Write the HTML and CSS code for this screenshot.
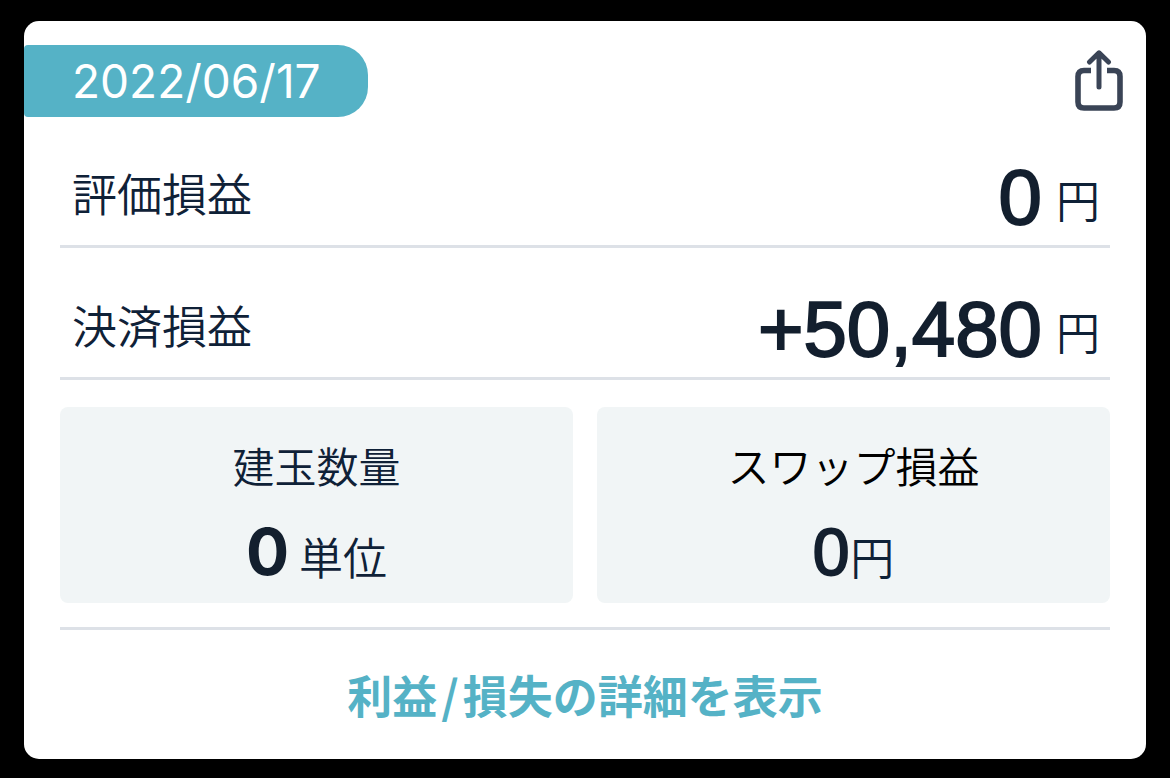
FILE: index.html
```
<!DOCTYPE html>
<html lang="ja">
<head>
    <meta charset="UTF-8">
    <meta name="viewport" content="width=device-width, initial-scale=1.0">
    <title>損益</title>
    <link rel="stylesheet" href="styles.css">
</head>
<body>
    <main class="card">
        <header class="card-header">
            <time class="date" datetime="2022-06-17">2022/06/17</time>
            <button class="share" type="button" aria-label="共有">
                <svg width="50" height="62" viewBox="0 0 50 62" fill="none" stroke="currentColor">
                    <path d="M17 20.500H10Q4 20.500 4 26.500V52Q4 58 10 58H40Q46 58 46 52V26.500Q46 20.500 40 20.500H33" stroke-width="5.6"/>
                    <path d="M25 37V4M15.500 12L25 2.800L34.500 12" stroke-width="5" stroke-linecap="round" stroke-linejoin="round"/>
                </svg>
            </button>
        </header>

        <dl class="totals">
            <div class="row">
                <dt class="label">評価損益</dt>
                <dd class="amount"><span class="number">0</span><span class="unit">円</span></dd>
            </div>
            <div class="row">
                <dt class="label">決済損益</dt>
                <dd class="amount"><span class="number">+50,480</span><span class="unit">円</span></dd>
            </div>
        </dl>

        <dl class="boxes">
            <div class="box">
                <dt class="box-label">建玉数量</dt>
                <dd class="box-value"><span class="quantity">0</span><span class="unit">単位</span></dd>
            </div>
            <div class="box">
                <dt class="box-label swap">スワップ損益</dt>
                <dd class="box-value tight"><span class="number">0</span><span class="unit">円</span></dd>
            </div>
        </dl>

        <footer class="card-footer">
            <a class="detail-link" href="#">利益<span class="slash">/</span>損失の詳細を表示</a>
        </footer>
    </main>
</body>
</html>
```
FILE: styles.css
```
* { box-sizing: border-box; margin: 0; padding: 0; }

body {
    padding: 21px 24px 19px;
    background: #000;
    color: #0f2137;
    font-family: "Noto Sans CJK JP", sans-serif;
    font-weight: 350;
}

.card {
    padding-top: 24px;
    background: #fff;
    border-radius: 15px;
    overflow: hidden;
}

.card-header {
    display: flex;
    justify-content: space-between;
    align-items: center;
    padding-right: 22px;
}

.date {
    padding: 0 47px 0 48px;
    background: #55b2c6;
    border-radius: 4px 30px 30px 4px;
    color: #fff;
    font-family: Inter, sans-serif;
    font-size: 46px;
    font-weight: 400;
    line-height: 72px;
}

.share {
    background: none;
    border: none;
    color: #3a4456;
    cursor: pointer;
}

.share svg { display: block; }

.totals {
    display: grid;
    gap: 1px;
    margin: 0 36px;
}

.row {
    display: flex;
    justify-content: space-between;
    align-items: flex-end;
    height: 131px;
    padding: 0 10px 8px 12px;
    border-bottom: 3px solid #dde1e7;
}

.label {
    font-size: 45px;
    line-height: 88px;
}

.unit {
    font-size: 44px;
    line-height: 76px;
}

.amount {
    display: flex;
    align-items: flex-end;
    gap: 14px;
}

.number {
    color: #131f2e;
    font-family: "Liberation Sans", Arial, sans-serif;
    font-size: 78px;
    font-weight: 400;
    line-height: 80px;
    -webkit-text-stroke: 2px #131f2e;
}

.boxes {
    display: grid;
    grid-template-columns: 1fr 1fr;
    gap: 24px;
    margin: 27px 36px 24px;
}

.box {
    height: 196px;
    padding-top: 28px;
    background: #f1f5f6;
    border-radius: 8px;
    text-align: center;
}

.box-label {
    font-size: 42px;
    line-height: 60px;
}

.swap { color: #000; }

.box-value {
    display: flex;
    justify-content: center;
    align-items: baseline;
    gap: 10px;
    margin-top: 17px;
}

.box-value.tight { gap: 1px; }

.box-value .number {
    font-size: 66px;
}

.quantity {
    color: #131f2e;
    font-family: Inter, sans-serif;
    font-size: 64px;
    font-weight: 700;
    line-height: 80px;
}

.card-footer {
    margin: 0 36px;
    padding: 32px 0;
    border-top: 3px solid #dde1e7;
    text-align: center;
}

.detail-link {
    color: #55b2c6;
    font-size: 45px;
    font-weight: 700;
    line-height: 65px;
    text-decoration: none;
}

.slash { padding: 0 4px; }
```
